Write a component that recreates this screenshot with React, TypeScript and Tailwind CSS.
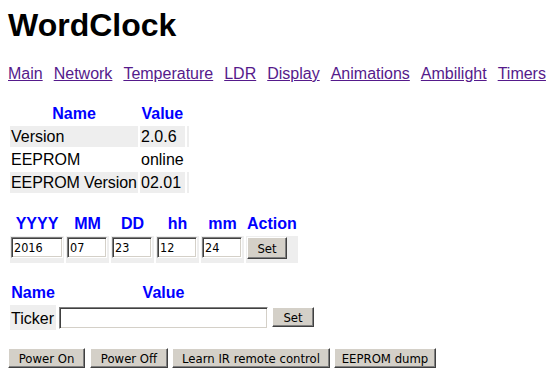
import React from "react";

const btn =
  "bg-[#d4d0c8] text-black border border-t-white border-l-white border-b-[#404040] border-r-[#404040] shadow-[inset_-1px_-1px_#808080] font-['DejaVu_Sans_Condensed','DejaVu_Sans',sans-serif] text-[13px] leading-none flex items-center justify-center p-0";
const inp =
  "bg-white text-black border border-t-[#808080] border-l-[#808080] border-b-white border-r-white shadow-[inset_1px_1px_#404040,inset_-1px_-1px_#d4d0c8] font-['DejaVu_Sans_Condensed','DejaVu_Sans',sans-serif] text-[12.5px] pl-[2px] outline-none block";

export default function App() {
  const links = ["Main", "Network", "Temperature", "LDR", "Display", "Animations", "Ambilight", "Timers"];
  return (
    <div className="bg-white w-[559px] h-[387px] overflow-hidden px-2 pt-[7px] font-['Liberation_Sans',Arial,sans-serif] text-[16px] text-black">
      <h1 className="m-0 text-[32px] font-bold leading-[37px]">WordClock</h1>
      <div className="mt-[21px] flex gap-[11px] leading-[18px] whitespace-nowrap">
        {links.map((l) => (
          <a key={l} href="#" className="text-[#551a8b] underline">
            {l}
          </a>
        ))}
      </div>

      <table className="mt-[17px] border-separate border-spacing-[2px] whitespace-nowrap">
        <thead>
          <tr>
            <th className="h-[22px] p-[1px] w-[128px] text-center font-bold text-[#0000ff] leading-[19px]">Name</th>
            <th className="h-[22px] p-[1px] w-[44px] text-center font-bold text-[#0000ff] leading-[19px]">Value</th>
            <th className="h-[22px] p-[1px] w-[2px]"></th>
          </tr>
        </thead>
        <tbody>
          <tr>
            <td className="h-[21px] p-[1px] leading-[19px] bg-[#eeeeee]">Version</td>
            <td className="h-[21px] p-[1px] leading-[19px] bg-[#eeeeee]">2.0.6</td>
            <td className="h-[21px] p-[1px] bg-[#eeeeee]"></td>
          </tr>
          <tr>
            <td className="h-[21px] p-[1px] leading-[19px]">EEPROM</td>
            <td className="h-[21px] p-[1px] leading-[19px]">online</td>
            <td className="h-[21px] p-[1px]"></td>
          </tr>
          <tr>
            <td className="h-[21px] p-[1px] leading-[19px] bg-[#eeeeee] tracking-[-0.1px]">EEPROM Version</td>
            <td className="h-[21px] p-[1px] leading-[19px] bg-[#eeeeee]">02.01</td>
            <td className="h-[21px] p-[1px] bg-[#eeeeee]"></td>
          </tr>
        </tbody>
      </table>

      <table className="mt-[16px] border-separate border-spacing-[2px] whitespace-nowrap">
        <thead>
          <tr>
            {[
              ["YYYY", "w-[54px]"],
              ["MM", "w-[43px]"],
              ["DD", "w-[43px]"],
              ["hh", "w-[43px]"],
              ["mm", "w-[43px]"],
              ["Action", "w-[50px]"],
            ].map(([h, w]) => (
              <th key={h} className={`${w} h-[21px] p-[1px] text-center font-bold text-[#0000ff] leading-[19px]`}>
                {h}
              </th>
            ))}
          </tr>
        </thead>
        <tbody>
          <tr>
            <td className="bg-[#eeeeee] pl-[1px] pt-[1px] pb-[4px] align-top">
              <input className={`${inp} w-[52px] h-[21px]`} defaultValue="2016" />
            </td>
            <td className="bg-[#eeeeee] pl-[1px] pt-[1px] pb-[4px] align-top">
              <input className={`${inp} w-[40px] h-[21px]`} defaultValue="07" />
            </td>
            <td className="bg-[#eeeeee] pl-[1px] pt-[1px] pb-[4px] align-top">
              <input className={`${inp} w-[40px] h-[21px]`} defaultValue="23" />
            </td>
            <td className="bg-[#eeeeee] pl-[1px] pt-[1px] pb-[4px] align-top">
              <input className={`${inp} w-[40px] h-[21px]`} defaultValue="12" />
            </td>
            <td className="bg-[#eeeeee] pl-[1px] pt-[1px] pb-[4px] align-top">
              <input className={`${inp} w-[40px] h-[21px]`} defaultValue="24" />
            </td>
            <td className="bg-[#eeeeee] pl-[1px] pt-[1px] pb-[4px] align-top">
              <button className={`${btn} w-[40px] h-[22px]`}>Set</button>
            </td>
          </tr>
        </tbody>
      </table>

      <table className="mt-[16px] border-separate border-spacing-[2px] whitespace-nowrap">
        <thead>
          <tr>
            <th className="w-[46px] h-[20px] p-[1px] text-center font-bold text-[#0000ff] leading-[18px]">Name</th>
            <th className="w-[211px] h-[20px] p-[1px] text-center font-bold text-[#0000ff] leading-[18px]">Value</th>
            <th className="w-[44px] h-[20px] p-[1px]"></th>
          </tr>
        </thead>
        <tbody>
          <tr>
            <td className="h-[25px] bg-[#eeeeee] px-[1px] pt-[4px] pb-[2px] leading-[19px] align-top">Ticker</td>
            <td className="h-[25px] pl-[1px] pt-[2px] align-top">
              <input className={`${inp} w-[209px] h-[22px]`} defaultValue="" />
            </td>
            <td className="h-[25px] pl-[1px] pt-[2px] align-top">
              <button className={`${btn} w-[42px] h-[20px]`}>Set</button>
            </td>
          </tr>
        </tbody>
      </table>

      <div className="mt-[16px] flex">
        <button className={`${btn} w-[77px] h-[20px]`}>Power On</button>
        <button className={`${btn} ml-[5px] w-[78px] h-[20px]`}>Power Off</button>
        <button className={`${btn} ml-[4px] w-[158px] h-[20px]`}>Learn IR remote control</button>
        <button className={`${btn} ml-[4px] w-[102px] h-[20px]`}>EEPROM dump</button>
      </div>
    </div>
  );
}
